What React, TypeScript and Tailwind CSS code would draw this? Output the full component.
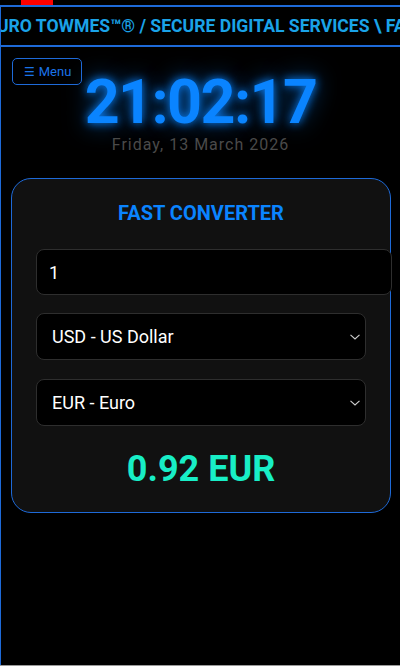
import React from "react";

function Chevron() {
  return (
    <svg
      className="pointer-events-none absolute right-[5px] top-1/2 -translate-y-1/2"
      width="10"
      height="6"
      viewBox="0 0 10 6"
      fill="none"
    >
      <path d="M0.5 0.8 L5 5 L9.5 0.8" stroke="#cfcfcf" strokeWidth="1.1" />
    </svg>
  );
}

export default function App() {
  return (
    <div
      className="w-[400px] bg-black text-white overflow-hidden"
      style={{ fontFamily: "Roboto, 'Liberation Sans', sans-serif" }}
    >
      <div className="h-[5px] flex">
        <div className="ml-[21px] w-[32px] h-full bg-[#ff0000]" />
      </div>
      <div className="h-[660px] border-l border-[#1e6ad8] flex flex-col relative">
        <div className="h-[42px] border-y-2 border-[#1e6ad8] overflow-hidden flex items-center">
          <div className="whitespace-nowrap ml-[-14px] text-[17.6px] font-bold text-[#1aa3e8] leading-none pt-[1px]">
            EURO TOWMES™® / SECURE DIGITAL SERVICES \ FAST CONVERTER
          </div>
        </div>

        <button className="absolute left-[11px] top-[53px] h-[27px] w-[70px] rounded-[5px] border border-[#1e6ad8] text-[#1a73e8] text-[13px] flex items-center px-[11px] gap-[4px]">
          <span style={{ fontFamily: "'DejaVu Sans', sans-serif" }} className="text-[12px]">☰</span>
          <span>Menu</span>
        </button>

        <div className="mt-[24px] text-center text-[61px] leading-[62px] tracking-[-1.6px] font-bold text-[#0a84ff] [text-shadow:0_0_10px_#0a84ff,0_0_24px_rgba(10,132,255,0.6)]">
          21:02:17
        </div>
        <div className="text-center text-[16px] leading-[24px] tracking-[1px] text-[#4a4a4a]">
          Friday, 13 March 2026
        </div>

        <div className="mt-[21px] ml-[10px] w-[380px] rounded-[20px] border border-[#1e6ad8] bg-[#111111] px-6 pt-5 pb-[23px]">
          <div className="text-center text-[20px] leading-[28px] font-bold text-[#0a84ff]">
            FAST CONVERTER
          </div>
          <div className="mt-[22px] w-[356px] h-[46px] rounded-[8px] border border-[#2e2e2e] bg-black flex items-center px-3 text-[18px] text-white">
            1
          </div>
          <div className="mt-[18px] relative h-[47px] rounded-[8px] border border-[#2e2e2e] bg-black flex items-center pl-[15px] text-[18px] text-white">
            USD - US Dollar
            <Chevron />
          </div>
          <div className="mt-[19px] relative h-[47px] rounded-[8px] border border-[#2e2e2e] bg-black flex items-center pl-[15px] text-[18px] text-white">
            EUR - Euro
            <Chevron />
          </div>
          <div className="mt-[23px] text-center text-[36px] leading-[40px] font-bold text-[#18eec6]">
            0.92 EUR
          </div>
        </div>
      </div>
      <div className="h-[20px] bg-[#9a9a9a]" />
    </div>
  );
}
